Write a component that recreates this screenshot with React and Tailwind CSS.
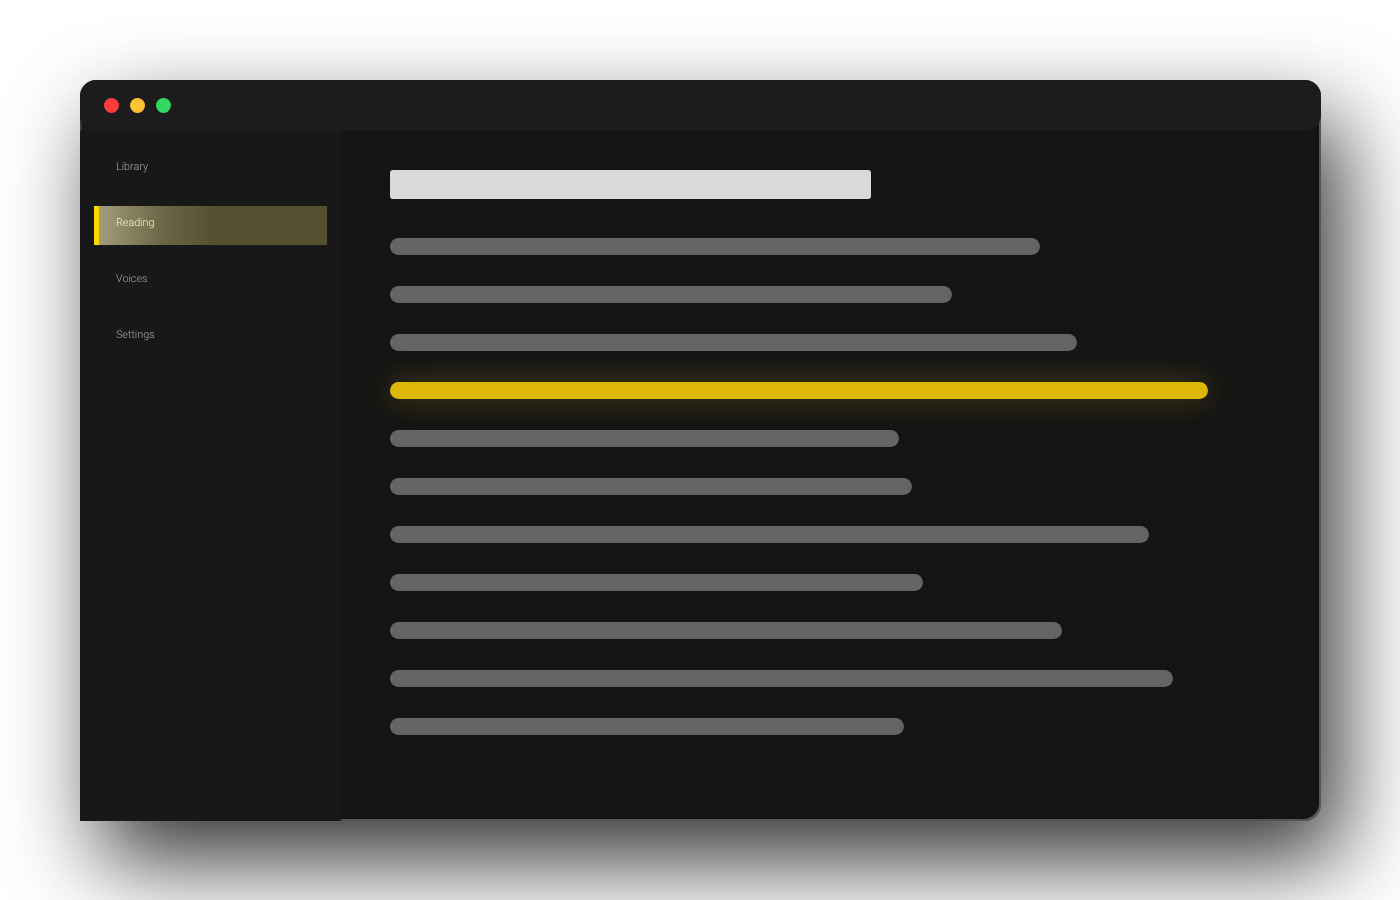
const bars = [
  { w: 650 }, { w: 562 }, { w: 687 }, { w: 818, hi: true }, { w: 509 }, { w: 522 },
  { w: 759 }, { w: 533 }, { w: 672 }, { w: 783 }, { w: 514 },
];
const nav = ["Library", "Reading", "Voices", "Settings"];

export default function App() {
  return (
    <div className="h-[900px] w-[1400px] overflow-hidden bg-white pl-20 pt-20 font-['Roboto',sans-serif] [text-rendering:geometricPrecision]">
      <div className="relative flex h-[741px] w-[1241px] flex-col rounded-br-2xl rounded-tl-2xl rounded-tr-2xl bg-[#555555] shadow-[20px_40px_90px_rgba(0,0,0,0.8)]">
        <div className="relative z-10 flex h-[51px] shrink-0 items-center gap-[11px] rounded-2xl bg-[#1c1c1c] pl-6">
          <span className="h-[15px] w-[15px] rounded-full bg-[#ff3b3b]" />
          <span className="h-[15px] w-[15px] rounded-full bg-[#ffc233]" />
          <span className="h-[15px] w-[15px] rounded-full bg-[#34d85f]" />
        </div>
        <div className="-mt-4 flex min-h-0 flex-1">
          <div className="relative w-[261px] shrink-0 bg-[#181818] pt-[35px] will-change-transform">
            <span className="absolute left-0 top-[3px] h-[13px] w-[2px] bg-[#3a3a3a]" />
            {nav.map((n) => (
              <div key={n} className={n === "Reading"
                ? "ml-[14px] mb-[17px] h-[39px] w-[233px] border-l-[5px] border-[#ffd600] bg-gradient-to-r from-[#a39d7c] via-[#6b6645] via-[28%] to-[#55502f] to-50% pl-[17px] pt-[7px] text-[10.75px] font-light leading-[20px] text-[#fff8c8]"
                : "ml-[14px] mb-[17px] h-[39px] w-[233px] pl-[22px] pt-[7px] text-[10.75px] font-light leading-[20px] text-[#ababab]"}>{n}</div>
            ))}
          </div>
          <div className="mb-[2px] mr-[2px] flex-1 rounded-br-2xl bg-[#141414] pl-[49px] pt-[55px]">
            <div className="mb-[39px] h-[29px] w-[481px] rounded-[3px] bg-[#d9d9d9]" />
            <div className="flex flex-col gap-[31px]">
              {bars.map((b, i) => (
                <div key={i} style={{ width: b.w }} className={b.hi
                  ? "h-[17px] rounded-full bg-[#deb808] shadow-[0_0_30px_rgba(255,214,0,0.25)]"
                  : "h-[17px] rounded-full bg-[#646464]"} />
              ))}
            </div>
          </div>
        </div>
      </div>
    </div>
  );
}
